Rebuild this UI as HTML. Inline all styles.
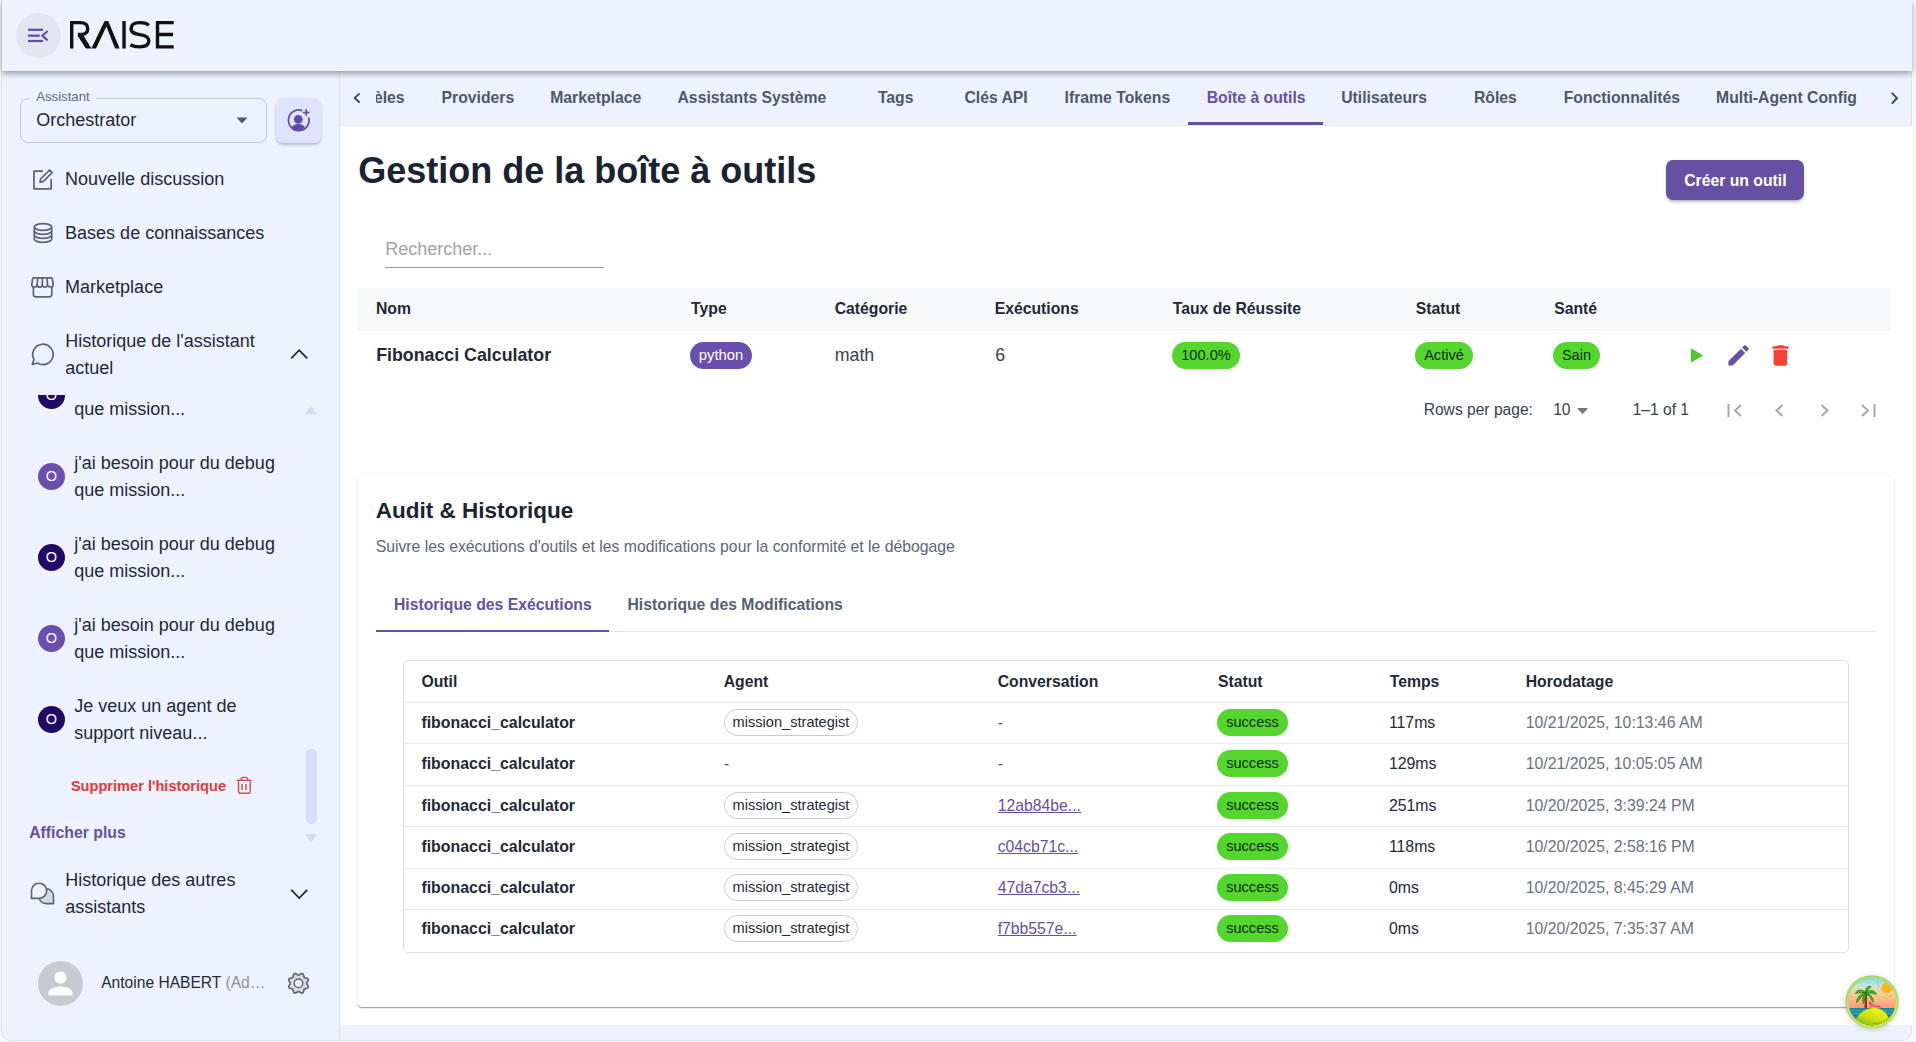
<!DOCTYPE html>
<html><head><meta charset="utf-8"><title>RAISE</title>
<style>
html,body{margin:0;padding:0;}
body{width:1916px;height:1042px;position:relative;overflow:hidden;font-family:"Liberation Sans",sans-serif;background:#f6f7f8;}
.r{position:absolute;display:block;}
.t{position:absolute;white-space:nowrap;line-height:1;}
</style></head><body>
<div class="r" style="left:0px;top:0px;width:1916px;height:1042px;background:#f6f7f8"></div>
<div class="r" style="left:1px;top:-2px;width:1911px;height:1043px;background:#eef2ff;border:1px solid #dfe1e6;border-radius:0 0 10px 10px;box-sizing:border-box;overflow:hidden"></div>
<div class="r" style="left:340px;top:126px;width:1572px;height:899px;background:#ffffff"></div>
<div class="r" style="left:339px;top:71px;width:1px;height:970px;background:#dde0ea"></div>
<div class="r" style="left:340px;top:125px;width:1572px;height:1px;background:#e3e6ee"></div>
<div class="r" style="left:2px;top:0px;width:1910px;height:71px;background:#eef2ff;box-shadow:0px 2px 4px -1px rgba(0,0,0,0.2),0px 4px 5px 0px rgba(0,0,0,0.14),0px 1px 10px 0px rgba(0,0,0,0.12)"></div>
<div class="r" style="left:16px;top:13px;width:45px;height:45px;background:#e3e6f0;border-radius:50%"></div>
<svg class="r" style="left:16px;top:13px;" width="45" height="45" viewBox="16 13 45 45"><g stroke="#5f50a6" stroke-width="2.2" fill="none"><line x1="28" y1="29.8" x2="43" y2="29.8"/><line x1="28" y1="35.7" x2="39.8" y2="35.7"/><line x1="28" y1="41" x2="43" y2="41"/><polyline points="47.6,31 42.3,35.7 47.6,40.3" stroke-linejoin="miter"/></g></svg>
<svg class="r" style="left:60px;top:10px;" width="120" height="50" viewBox="0 0 1916 798"><g stroke="#111" stroke-width="54" fill="none" stroke-linejoin="miter"><path d="M187 175 V615"/><path d="M160 202 H320 C410 202 443 245 443 298 C443 352 410 392 320 392 H285"/><path d="M290 368 L350 368 L502 615 L412 615 L290 422 Z" fill="#111" stroke="none"/><path d="M500 615 L712 175 L770 175 L952 615 L880 615 L741 262 L575 615 Z" fill="#111" stroke="none"/><path d="M1022 175 V615"/><path d="M1418 245 C1385 212 1335 202 1275 202 C1190 202 1135 235 1135 298 C1135 365 1195 380 1275 392 C1365 405 1418 425 1418 495 C1418 565 1360 588 1270 588 C1210 588 1160 575 1125 555"/><path d="M1557 175 V615 M1530 202 H1815 M1557 390 H1805 M1530 588 H1815"/></g></svg>
<div class="r" style="left:20px;top:98px;width:247px;height:45px;border:1px solid #c3c6cf;border-radius:8px;box-sizing:border-box"></div>
<div class="r" style="left:30px;top:92px;width:66px;height:10px;background:#eef2ff"></div>
<div class="t" style="left:36.2px;top:89px;line-height:15px;font-size:13.2px;font-weight:400;color:#5f6877;">Assistant</div>
<div class="t" style="left:36.2px;top:110px;line-height:20px;font-size:18px;font-weight:400;color:#1e293b;">Orchestrator</div>
<svg class="r" style="left:236px;top:117px;" width="12" height="7" viewBox="0 0 12 7"><path d="M0.5 0.5 L11.5 0.5 L6 6.5 Z" fill="#555b66"/></svg>
<div class="r" style="left:276px;top:98px;width:45px;height:45px;background:#dfe4fd;border-radius:7px;box-shadow:0 2px 3px rgba(0,0,0,.22)"></div>
<svg class="r" style="left:286px;top:108px;" width="24" height="24" viewBox="0 0 24 24"><g fill="none" stroke="#6149a8" stroke-width="1.7"><path d="M16.2 2.6 A10.3 10.3 0 1 0 22.6 9.4"/></g><g fill="#6149a8"><circle cx="12.3" cy="11.4" r="4.3"/><path d="M5.6 19.2 C7.3 16.8 9.5 15.9 12.3 15.9 C15.1 15.9 17.3 16.8 19 19.2 C17.2 21.2 14.9 22.2 12.3 22.2 C9.7 22.2 7.4 21.2 5.6 19.2 Z"/></g><g stroke="#6149a8" stroke-width="1.6"><line x1="20.2" y1="1.2" x2="20.2" y2="7.8"/><line x1="16.9" y1="4.5" x2="23.5" y2="4.5"/></g></svg>
<div class="t" style="left:65.1px;top:169px;line-height:20px;font-size:18px;font-weight:400;color:#1e293b;">Nouvelle discussion</div>
<svg class="r" style="left:32px;top:168px;" width="22" height="22" viewBox="0 0 22 22"><g fill="none" stroke="#5c6370" stroke-width="1.7" stroke-linejoin="round"><path d="M11 3.2 H2 V20.8 H19.2 V11"/><path d="M8 14.2 L8.6 11 L17.6 2 L20.2 4.6 L11.2 13.6 Z"/></g></svg>
<div class="t" style="left:65.1px;top:223px;line-height:20px;font-size:18px;font-weight:400;color:#1e293b;">Bases de connaissances</div>
<svg class="r" style="left:32px;top:222px;" width="22" height="22" viewBox="0 0 22 22"><g fill="none" stroke="#5c6370" stroke-width="1.7"><ellipse cx="11" cy="5" rx="8.7" ry="3.3"/><path d="M2.3 5 V17 C2.3 18.9 6.2 20.4 11 20.4 C15.8 20.4 19.7 18.9 19.7 17 V5"/><path d="M2.3 9 C2.3 10.9 6.2 12.4 11 12.4 C15.8 12.4 19.7 10.9 19.7 9"/><path d="M2.3 13 C2.3 14.9 6.2 16.4 11 16.4 C15.8 16.4 19.7 14.9 19.7 13"/></g></svg>
<div class="t" style="left:65.1px;top:277px;line-height:20px;font-size:18px;font-weight:400;color:#1e293b;">Marketplace</div>
<svg class="r" style="left:25px;top:270px;" width="35" height="30" viewBox="25 270 35 30"><g fill="none" stroke="#5c6370" stroke-width="1.7" stroke-linejoin="round" stroke-linecap="round"><path d="M33.6 277.8 H51.4 Q52.2 278 52.4 279.2 L53.2 284.6 Q53.4 286.9 50.8 287 Q48.2 287.1 47.5 285 L47.1 277.8"/><path d="M33.6 277.8 Q32.8 278 32.6 279.2 L31.8 284.6 Q31.6 286.9 34.2 287 Q36.8 287.1 37.2 285 L37.7 277.8"/><path d="M37.2 285 Q37.6 287.2 39.8 287.2 Q42.1 287.2 42.3 285 L42.4 277.8"/><path d="M42.3 285 Q42.6 287.2 44.9 287.2 Q47.2 287.2 47.5 285"/><path d="M33.4 287.3 V294.6 Q33.4 296.8 35.6 296.8 H49.6 Q51.8 296.8 51.8 294.6 V287.3"/></g></svg>
<div class="t" style="left:65.3px;top:331px;line-height:20px;font-size:18px;font-weight:400;color:#1e293b;">Historique de l'assistant</div>
<div class="t" style="left:65.3px;top:358px;line-height:20px;font-size:18px;font-weight:400;color:#1e293b;">actuel</div>
<svg class="r" style="left:25px;top:335px;" width="35" height="35" viewBox="25 335 35 35"><path d="M37.4 363 A10.2 10.2 0 1 0 33.9 359.2 L32.3 364.4 Z" fill="none" stroke="#5c6370" stroke-width="1.7" stroke-linejoin="round"/></svg>
<svg class="r" style="left:289px;top:347px;" width="20" height="13" viewBox="0 0 20 13"><polyline points="2.2,11.4 10.2,3.2 18.2,11.4" fill="none" stroke="#1f2430" stroke-width="1.7"/></svg>
<div class="r" style="left:2px;top:395px;width:300px;height:460px;overflow:hidden">
<div class="r" style="left:36px;top:-13.0px;width:27px;height:27px;border-radius:50%;background:#210a66"></div>
<div class="t" style="left:36px;top:-13.0px;width:27px;height:27px;line-height:27px;text-align:center;font-size:14.5px;color:#fff">O</div>
<div class="t" style="left:72.3px;top:-23px;line-height:20px;font-size:18px;color:#1e293b">j'ai besoin pour du debug</div>
<div class="t" style="left:72.3px;top:4px;line-height:20px;font-size:18px;color:#1e293b">que mission...</div>
<div class="r" style="left:36px;top:68.0px;width:27px;height:27px;border-radius:50%;background:#6a4fb0"></div>
<div class="t" style="left:36px;top:68.0px;width:27px;height:27px;line-height:27px;text-align:center;font-size:14.5px;color:#fff">O</div>
<div class="t" style="left:72.3px;top:58px;line-height:20px;font-size:18px;color:#1e293b">j'ai besoin pour du debug</div>
<div class="t" style="left:72.3px;top:85px;line-height:20px;font-size:18px;color:#1e293b">que mission...</div>
<div class="r" style="left:36px;top:149.0px;width:27px;height:27px;border-radius:50%;background:#210a66"></div>
<div class="t" style="left:36px;top:149.0px;width:27px;height:27px;line-height:27px;text-align:center;font-size:14.5px;color:#fff">O</div>
<div class="t" style="left:72.3px;top:139px;line-height:20px;font-size:18px;color:#1e293b">j'ai besoin pour du debug</div>
<div class="t" style="left:72.3px;top:166px;line-height:20px;font-size:18px;color:#1e293b">que mission...</div>
<div class="r" style="left:36px;top:230.0px;width:27px;height:27px;border-radius:50%;background:#6a4fb0"></div>
<div class="t" style="left:36px;top:230.0px;width:27px;height:27px;line-height:27px;text-align:center;font-size:14.5px;color:#fff">O</div>
<div class="t" style="left:72.3px;top:220px;line-height:20px;font-size:18px;color:#1e293b">j'ai besoin pour du debug</div>
<div class="t" style="left:72.3px;top:247px;line-height:20px;font-size:18px;color:#1e293b">que mission...</div>
<div class="r" style="left:36px;top:311.0px;width:27px;height:27px;border-radius:50%;background:#210a66"></div>
<div class="t" style="left:36px;top:311.0px;width:27px;height:27px;line-height:27px;text-align:center;font-size:14.5px;color:#fff">O</div>
<div class="t" style="left:72.3px;top:301px;line-height:20px;font-size:18px;color:#1e293b">Je veux un agent de</div>
<div class="t" style="left:72.3px;top:328px;line-height:20px;font-size:18px;color:#1e293b">support niveau...</div>
</div>
<svg class="r" style="left:304px;top:404px;" width="14" height="11" viewBox="0 0 14 11"><path d="M1 10 L7 2 L13 10 Z" fill="#d4daf3"/></svg>
<div class="r" style="left:306px;top:749px;width:11px;height:75px;background:#d9def8;border-radius:5px"></div>
<svg class="r" style="left:304px;top:833px;" width="14" height="11" viewBox="0 0 14 11"><path d="M1 1 L13 1 L7 10 Z" fill="#d4daf3"/></svg>
<div class="t" style="left:70.9px;top:778px;line-height:16px;font-size:14.6px;font-weight:700;color:#e53935;">Supprimer l'historique</div>
<svg class="r" style="left:228px;top:770px;" width="32" height="30" viewBox="228 770 32 30"><g fill="none" stroke="#dc4a4a" stroke-width="1.4" stroke-linejoin="round"><path d="M236.6 780.3 H251.4"/><path d="M240.9 780 Q241.2 777.4 243.1 777.4 H245.8 Q247.6 777.4 247.9 780"/><path d="M238.5 780.6 V791.3 Q238.5 793.2 240.4 793.2 H248.3 Q250.2 793.2 250.2 791.3 V780.6"/></g><g fill="#d26a6e"><rect x="241.2" y="784" width="1.8" height="6"/><rect x="245.1" y="784" width="1.8" height="6"/></g></svg>
<div class="t" style="left:29.2px;top:824px;line-height:17px;font-size:15.8px;font-weight:700;color:#6750a4;">Afficher plus</div>
<div class="t" style="left:65.3px;top:870px;line-height:20px;font-size:18px;font-weight:400;color:#1e293b;">Historique des autres</div>
<div class="t" style="left:65.3px;top:897px;line-height:20px;font-size:18px;font-weight:400;color:#1e293b;">assistants</div>
<svg class="r" style="left:25px;top:875px;" width="35" height="35" viewBox="25 875 35 35"><g stroke="#5c6370" stroke-width="1.6" stroke-linejoin="round"><path d="M53.5 896.2 V903.6 H46.2 A7.4 7.4 0 1 1 53.5 896.2 Z" fill="#d6d9e1"/><path d="M31.5 890.8 A7.6 7.6 0 1 1 39.1 898.4 H31.5 Z" fill="#eef2ff"/></g></svg>
<svg class="r" style="left:289px;top:887px;" width="20" height="13" viewBox="0 0 20 13"><polyline points="2.2,2.8 10.2,11 18.2,2.8" fill="none" stroke="#1f2430" stroke-width="1.7"/></svg>
<div class="r" style="left:38px;top:961px;width:45px;height:45px;background:#c7cad1;border-radius:50%"></div>
<svg class="r" style="left:38px;top:961px;" width="45" height="45" viewBox="0 0 24 24"><path fill="#ffffff" d="M12 12c2.21 0 4-1.79 4-4s-1.79-4-4-4-4 1.79-4 4 1.79 4 4 4zm0 2c-2.67 0-8 1.34-8 4v2h16v-2c0-2.66-5.33-4-8-4z" transform="translate(2.4 2.4) scale(0.8)"/></svg>
<div class="t" style="left:101.2px;top:974px;line-height:17px;font-size:15.6px;font-weight:400;color:#1e293b;">Antoine HABERT <span style="color:#8a919c">(Ad…</span></div>
<svg class="r" style="left:280px;top:965px;" width="36" height="36" viewBox="280 965 36 36"><path d="M298.50 975.10 L299.05 974.96 L299.65 974.60 L300.32 974.13 L301.07 973.71 L301.83 973.50 L302.52 973.60 L303.08 974.02 L303.46 974.70 L303.69 975.53 L303.84 976.34 L304.01 977.02 L304.30 977.50 L304.78 977.79 L305.46 977.96 L306.27 978.11 L307.10 978.34 L307.78 978.72 L308.20 979.28 L308.30 979.97 L308.09 980.73 L307.67 981.48 L307.20 982.15 L306.84 982.75 L306.70 983.30 L306.84 983.85 L307.20 984.45 L307.67 985.12 L308.09 985.87 L308.30 986.63 L308.20 987.32 L307.78 987.88 L307.10 988.26 L306.27 988.49 L305.46 988.64 L304.78 988.81 L304.30 989.10 L304.01 989.58 L303.84 990.26 L303.69 991.07 L303.46 991.90 L303.08 992.58 L302.52 993.00 L301.83 993.10 L301.07 992.89 L300.32 992.47 L299.65 992.00 L299.05 991.64 L298.50 991.50 L297.95 991.64 L297.35 992.00 L296.68 992.47 L295.93 992.89 L295.17 993.10 L294.48 993.00 L293.92 992.58 L293.54 991.90 L293.31 991.07 L293.16 990.26 L292.99 989.58 L292.70 989.10 L292.22 988.81 L291.54 988.64 L290.73 988.49 L289.90 988.26 L289.22 987.88 L288.80 987.32 L288.70 986.63 L288.91 985.87 L289.33 985.12 L289.80 984.45 L290.16 983.85 L290.30 983.30 L290.16 982.75 L289.80 982.15 L289.33 981.48 L288.91 980.73 L288.70 979.97 L288.80 979.28 L289.22 978.72 L289.90 978.34 L290.73 978.11 L291.54 977.96 L292.22 977.79 L292.70 977.50 L292.99 977.02 L293.16 976.34 L293.31 975.53 L293.54 974.70 L293.92 974.02 L294.48 973.60 L295.17 973.50 L295.93 973.71 L296.68 974.13 L297.35 974.60 L297.95 974.96 L298.50 975.10 Z" fill="#d9dbe2" stroke="#5c6370" stroke-width="1.6" stroke-linejoin="round"/><circle cx="298.5" cy="983.3" r="4.3" fill="#eef2ff" stroke="#5c6370" stroke-width="1.4"/></svg>
<svg class="r" style="left:350px;top:88px;" width="14" height="20" viewBox="0 0 14 20"><polyline points="9.6,5.3 4.7,9.9 9.6,14.5" fill="none" stroke="#3a4150" stroke-width="1.8"/></svg>
<div class="r" style="left:376px;top:80px;width:34px;height:30px;overflow:hidden"><div class="t" style="right:5.4px;top:9px;line-height:17px;font-size:15.75px;font-weight:700;color:#4d5869">Modèles</div></div>
<div class="t" style="left:441.6px;top:89px;line-height:17px;font-size:15.75px;font-weight:700;color:#4d5869;">Providers</div>
<div class="t" style="left:550.2px;top:89px;line-height:17px;font-size:15.75px;font-weight:700;color:#4d5869;">Marketplace</div>
<div class="t" style="left:677.5px;top:89px;line-height:17px;font-size:15.75px;font-weight:700;color:#4d5869;">Assistants Système</div>
<div class="t" style="left:877.9px;top:89px;line-height:17px;font-size:15.75px;font-weight:700;color:#4d5869;">Tags</div>
<div class="t" style="left:964.4px;top:89px;line-height:17px;font-size:15.75px;font-weight:700;color:#4d5869;">Clés API</div>
<div class="t" style="left:1064.6px;top:89px;line-height:17px;font-size:15.75px;font-weight:700;color:#4d5869;">Iframe Tokens</div>
<div class="t" style="left:1206.7px;top:89px;line-height:17px;font-size:15.75px;font-weight:700;color:#6750a4;">Boîte à outils</div>
<div class="t" style="left:1341.2px;top:89px;line-height:17px;font-size:15.75px;font-weight:700;color:#4d5869;">Utilisateurs</div>
<div class="t" style="left:1473.9px;top:89px;line-height:17px;font-size:15.75px;font-weight:700;color:#4d5869;">Rôles</div>
<div class="t" style="left:1563.7px;top:89px;line-height:17px;font-size:15.75px;font-weight:700;color:#4d5869;">Fonctionnalités</div>
<div class="t" style="left:1716.1px;top:89px;line-height:17px;font-size:15.75px;font-weight:700;color:#4d5869;">Multi-Agent Config</div>
<div class="r" style="left:1188px;top:122px;width:135px;height:3px;background:#6750a4"></div>
<svg class="r" style="left:1885px;top:89px;" width="16" height="18" viewBox="0 0 16 18"><polyline points="6.8,3.8 12,9.2 6.8,14.6" fill="none" stroke="#3a4150" stroke-width="1.9"/></svg>
<div class="t" style="left:358.2px;top:150px;line-height:41px;font-size:36px;font-weight:700;color:#1a2332;">Gestion de la boîte à outils</div>
<div class="r" style="left:1666px;top:160px;width:138px;height:40px;background:#6750a4;border-radius:7px;box-shadow:0 3px 3px -2px rgba(0,0,0,.25),0 2px 4px rgba(0,0,0,.14)"></div>
<div class="t" style="left:1684.2px;top:172px;line-height:17px;font-size:15.75px;font-weight:700;color:#ffffff;">Créer un outil</div>
<div class="t" style="left:385.2px;top:239px;line-height:20px;font-size:18px;font-weight:400;color:#a3a3a3;">Rechercher...</div>
<div class="r" style="left:385px;top:267px;width:219px;height:1px;background:#9a9a9a"></div>
<div class="r" style="left:357px;top:288px;width:1534px;height:42px;background:#f8f9fb;border-bottom:1px solid #eef0f3;box-sizing:border-box"></div>
<div class="t" style="left:375.9px;top:300px;line-height:17px;font-size:15.75px;font-weight:700;color:#1f2937;">Nom</div>
<div class="t" style="left:691.1px;top:300px;line-height:17px;font-size:15.75px;font-weight:700;color:#1f2937;">Type</div>
<div class="t" style="left:834.7px;top:300px;line-height:17px;font-size:15.75px;font-weight:700;color:#1f2937;">Catégorie</div>
<div class="t" style="left:994.7px;top:300px;line-height:17px;font-size:15.75px;font-weight:700;color:#1f2937;">Exécutions</div>
<div class="t" style="left:1172.7px;top:300px;line-height:17px;font-size:15.75px;font-weight:700;color:#1f2937;">Taux de Réussite</div>
<div class="t" style="left:1415.7px;top:300px;line-height:17px;font-size:15.75px;font-weight:700;color:#1f2937;">Statut</div>
<div class="t" style="left:1554.2px;top:300px;line-height:17px;font-size:15.75px;font-weight:700;color:#1f2937;">Santé</div>
<div class="t" style="left:376.2px;top:345px;line-height:20px;font-size:17.8px;font-weight:700;color:#1f2937;">Fibonacci Calculator</div>
<div class="r" style="left:690px;top:342px;width:62px;height:27px;border-radius:13.5px;background:#6a4fb0;color:#ffffff;font-size:14.8px;line-height:27px;text-align:center;white-space:nowrap">python</div>
<div class="t" style="left:834.7px;top:345px;line-height:20px;font-size:17.8px;font-weight:400;color:#374151;">math</div>
<div class="t" style="left:995.2px;top:345px;line-height:20px;font-size:17.8px;font-weight:400;color:#374151;">6</div>
<div class="r" style="left:1172px;top:342px;width:68px;height:27px;border-radius:13.5px;background:#54d62e;color:#0f2e0c;font-size:14.6px;line-height:26.5px;text-align:center;white-space:nowrap">100.0%</div>
<div class="r" style="left:1415px;top:342px;width:58px;height:27px;border-radius:13.5px;background:#54d62e;color:#0f2e0c;font-size:14.6px;line-height:26.5px;text-align:center;white-space:nowrap">Activé</div>
<div class="r" style="left:1553px;top:342px;width:47px;height:27px;border-radius:13.5px;background:#54d62e;color:#0f2e0c;font-size:14.6px;line-height:26.5px;text-align:center;white-space:nowrap">Sain</div>
<svg class="r" style="left:1680px;top:340px;" width="120" height="30" viewBox="1680 340 120 30"><path fill="#4cc92a" transform="translate(1682.1 342.9) scale(1.1 1.05)" d="M8 5v14l11-7z"/><path fill="#6750a4" transform="translate(1725 341.8) scale(1.133)" d="M3 17.25V21h3.75L17.81 9.94l-3.75-3.75zM20.71 7.04c.39-.39.39-1.02 0-1.41l-2.34-2.34a.9959.9959 0 0 0-1.41 0l-1.83 1.83 3.75 3.75z"/><path fill="#f44336" transform="translate(1766.7 341.8) scale(1.14)" d="M6 19c0 1.1.9 2 2 2h8c1.1 0 2-.9 2-2V7H6v12zM19 4h-3.5l-1-1h-5l-1 1H5v2h14V4z"/></svg>
<div class="t" style="left:1423.7px;top:401px;line-height:17px;font-size:15.6px;font-weight:400;color:#374151;">Rows per page:</div>
<div class="t" style="left:1553.2px;top:401px;line-height:17px;font-size:15.6px;font-weight:400;color:#374151;">10</div>
<svg class="r" style="left:1576px;top:407px;" width="14" height="8" viewBox="0 0 14 8"><path d="M1 1 H12.2 L6.6 7 Z" fill="#737373"/></svg>
<div class="t" style="left:1632.7px;top:401px;line-height:17px;font-size:15.6px;font-weight:400;color:#374151;">1–1 of 1</div>
<svg class="r" style="left:1726px;top:402px;" width="17" height="17" viewBox="0 0 17 17"><g fill="none" stroke="#a3a8b0" stroke-width="2"><line x1="2.5" y1="2" x2="2.5" y2="15"/><polyline points="15,3 9,8.5 15,14"/></g></svg>
<svg class="r" style="left:1773px;top:402px;" width="12" height="17" viewBox="0 0 12 17"><polyline points="9.5,3 3.5,8.5 9.5,14" fill="none" stroke="#a3a8b0" stroke-width="2"/></svg>
<svg class="r" style="left:1819px;top:402px;" width="12" height="17" viewBox="0 0 12 17"><polyline points="2.5,3 8.5,8.5 2.5,14" fill="none" stroke="#a3a8b0" stroke-width="2"/></svg>
<svg class="r" style="left:1860px;top:402px;" width="17" height="17" viewBox="0 0 17 17"><g fill="none" stroke="#a3a8b0" stroke-width="2"><line x1="14.5" y1="2" x2="14.5" y2="15"/><polyline points="2,3 8,8.5 2,14"/></g></svg>
<div class="r" style="left:357px;top:476px;width:1537px;height:531px;background:#fff;border-radius:5px;box-shadow:0px 2px 1px -1px rgba(0,0,0,0.2),0px 1px 1px 0px rgba(0,0,0,0.14),0px 1px 3px 0px rgba(0,0,0,0.12)"></div>
<div class="t" style="left:375.7px;top:498px;line-height:25px;font-size:22.5px;font-weight:700;color:#1a2332;">Audit &amp; Historique</div>
<div class="t" style="left:375.7px;top:538px;line-height:17px;font-size:15.76px;font-weight:400;color:#5c6878;">Suivre les exécutions d'outils et les modifications pour la conformité et le débogage</div>
<div class="r" style="left:376px;top:631px;width:1500px;height:1px;background:#e5e7eb"></div>
<div class="t" style="left:393.9px;top:596px;line-height:17px;font-size:15.75px;font-weight:700;color:#6750a4;">Historique des Exécutions</div>
<div class="t" style="left:627.5px;top:596px;line-height:17px;font-size:15.75px;font-weight:700;color:#536175;">Historique des Modifications</div>
<div class="r" style="left:376px;top:630px;width:233px;height:2px;background:#6750a4"></div>
<div class="r" style="left:403px;top:660px;width:1446px;height:293px;border:1px solid #e0e0e0;border-radius:5px;box-sizing:border-box"></div>
<div class="t" style="left:421.4px;top:673px;line-height:17px;font-size:15.75px;font-weight:700;color:#1f2937;">Outil</div>
<div class="t" style="left:723.7px;top:673px;line-height:17px;font-size:15.75px;font-weight:700;color:#1f2937;">Agent</div>
<div class="t" style="left:997.7px;top:673px;line-height:17px;font-size:15.75px;font-weight:700;color:#1f2937;">Conversation</div>
<div class="t" style="left:1217.9px;top:673px;line-height:17px;font-size:15.75px;font-weight:700;color:#1f2937;">Statut</div>
<div class="t" style="left:1389.7px;top:673px;line-height:17px;font-size:15.75px;font-weight:700;color:#1f2937;">Temps</div>
<div class="t" style="left:1525.7px;top:673px;line-height:17px;font-size:15.75px;font-weight:700;color:#1f2937;">Horodatage</div>
<div class="r" style="left:404px;top:702px;width:1444px;height:1px;background:#e9e9ea"></div>
<div class="r" style="left:404px;top:743px;width:1444px;height:1px;background:#e9e9ea"></div>
<div class="r" style="left:404px;top:785px;width:1444px;height:1px;background:#e9e9ea"></div>
<div class="r" style="left:404px;top:826px;width:1444px;height:1px;background:#e9e9ea"></div>
<div class="r" style="left:404px;top:868px;width:1444px;height:1px;background:#e9e9ea"></div>
<div class="r" style="left:404px;top:909px;width:1444px;height:1px;background:#e9e9ea"></div>
<div class="t" style="left:421.4px;top:714px;line-height:17px;font-size:15.9px;font-weight:700;color:#1f2937;">fibonacci_calculator</div>
<div class="r" style="left:724px;top:709px;width:134px;height:27px;border-radius:13.5px;background:#fff;border:1px solid #c8cbd0;box-sizing:border-box;color:#1f2937;font-size:14.6px;line-height:25px;text-align:center;white-space:nowrap">mission_strategist</div>
<div class="t" style="left:997.7px;top:714px;line-height:17px;font-size:16px;font-weight:400;color:#4b5563;">-</div>
<div class="r" style="left:1217px;top:709px;width:71px;height:27px;border-radius:13.5px;background:#54d62e;color:#0f2e0c;font-size:14.6px;line-height:27px;text-align:center;white-space:nowrap">success</div>
<div class="t" style="left:1388.9px;top:714px;line-height:17px;font-size:15.85px;font-weight:400;color:#1f2937;">117ms</div>
<div class="t" style="left:1525.7px;top:714px;line-height:17px;font-size:15.85px;font-weight:400;color:#6b7280;">10/21/2025, 10:13:46 AM</div>
<div class="t" style="left:421.4px;top:755px;line-height:17px;font-size:15.9px;font-weight:700;color:#1f2937;">fibonacci_calculator</div>
<div class="t" style="left:723.7px;top:755px;line-height:17px;font-size:16px;font-weight:400;color:#4b5563;">-</div>
<div class="t" style="left:997.7px;top:755px;line-height:17px;font-size:16px;font-weight:400;color:#4b5563;">-</div>
<div class="r" style="left:1217px;top:750px;width:71px;height:27px;border-radius:13.5px;background:#54d62e;color:#0f2e0c;font-size:14.6px;line-height:27px;text-align:center;white-space:nowrap">success</div>
<div class="t" style="left:1388.9px;top:755px;line-height:17px;font-size:15.85px;font-weight:400;color:#1f2937;">129ms</div>
<div class="t" style="left:1525.7px;top:755px;line-height:17px;font-size:15.85px;font-weight:400;color:#6b7280;">10/21/2025, 10:05:05 AM</div>
<div class="t" style="left:421.4px;top:797px;line-height:17px;font-size:15.9px;font-weight:700;color:#1f2937;">fibonacci_calculator</div>
<div class="r" style="left:724px;top:792px;width:134px;height:27px;border-radius:13.5px;background:#fff;border:1px solid #c8cbd0;box-sizing:border-box;color:#1f2937;font-size:14.6px;line-height:25px;text-align:center;white-space:nowrap">mission_strategist</div>
<div class="t" style="left:997.7px;top:797px;line-height:17px;font-size:15.75px;font-weight:400;color:#6750a4;text-decoration:underline;text-underline-offset:1px">12ab84be...</div>
<div class="r" style="left:1217px;top:792px;width:71px;height:27px;border-radius:13.5px;background:#54d62e;color:#0f2e0c;font-size:14.6px;line-height:27px;text-align:center;white-space:nowrap">success</div>
<div class="t" style="left:1388.9px;top:797px;line-height:17px;font-size:15.85px;font-weight:400;color:#1f2937;">251ms</div>
<div class="t" style="left:1525.7px;top:797px;line-height:17px;font-size:15.85px;font-weight:400;color:#6b7280;">10/20/2025, 3:39:24 PM</div>
<div class="t" style="left:421.4px;top:838px;line-height:17px;font-size:15.9px;font-weight:700;color:#1f2937;">fibonacci_calculator</div>
<div class="r" style="left:724px;top:833px;width:134px;height:27px;border-radius:13.5px;background:#fff;border:1px solid #c8cbd0;box-sizing:border-box;color:#1f2937;font-size:14.6px;line-height:25px;text-align:center;white-space:nowrap">mission_strategist</div>
<div class="t" style="left:997.7px;top:838px;line-height:17px;font-size:15.75px;font-weight:400;color:#6750a4;text-decoration:underline;text-underline-offset:1px">c04cb71c...</div>
<div class="r" style="left:1217px;top:833px;width:71px;height:27px;border-radius:13.5px;background:#54d62e;color:#0f2e0c;font-size:14.6px;line-height:27px;text-align:center;white-space:nowrap">success</div>
<div class="t" style="left:1388.9px;top:838px;line-height:17px;font-size:15.85px;font-weight:400;color:#1f2937;">118ms</div>
<div class="t" style="left:1525.7px;top:838px;line-height:17px;font-size:15.85px;font-weight:400;color:#6b7280;">10/20/2025, 2:58:16 PM</div>
<div class="t" style="left:421.4px;top:879px;line-height:17px;font-size:15.9px;font-weight:700;color:#1f2937;">fibonacci_calculator</div>
<div class="r" style="left:724px;top:874px;width:134px;height:27px;border-radius:13.5px;background:#fff;border:1px solid #c8cbd0;box-sizing:border-box;color:#1f2937;font-size:14.6px;line-height:25px;text-align:center;white-space:nowrap">mission_strategist</div>
<div class="t" style="left:997.7px;top:879px;line-height:17px;font-size:15.75px;font-weight:400;color:#6750a4;text-decoration:underline;text-underline-offset:1px">47da7cb3...</div>
<div class="r" style="left:1217px;top:874px;width:71px;height:27px;border-radius:13.5px;background:#54d62e;color:#0f2e0c;font-size:14.6px;line-height:27px;text-align:center;white-space:nowrap">success</div>
<div class="t" style="left:1388.9px;top:879px;line-height:17px;font-size:15.85px;font-weight:400;color:#1f2937;">0ms</div>
<div class="t" style="left:1525.7px;top:879px;line-height:17px;font-size:15.85px;font-weight:400;color:#6b7280;">10/20/2025, 8:45:29 AM</div>
<div class="t" style="left:421.4px;top:920px;line-height:17px;font-size:15.9px;font-weight:700;color:#1f2937;">fibonacci_calculator</div>
<div class="r" style="left:724px;top:915px;width:134px;height:27px;border-radius:13.5px;background:#fff;border:1px solid #c8cbd0;box-sizing:border-box;color:#1f2937;font-size:14.6px;line-height:25px;text-align:center;white-space:nowrap">mission_strategist</div>
<div class="t" style="left:997.7px;top:920px;line-height:17px;font-size:15.75px;font-weight:400;color:#6750a4;text-decoration:underline;text-underline-offset:1px">f7bb557e...</div>
<div class="r" style="left:1217px;top:915px;width:71px;height:27px;border-radius:13.5px;background:#54d62e;color:#0f2e0c;font-size:14.6px;line-height:27px;text-align:center;white-space:nowrap">success</div>
<div class="t" style="left:1388.9px;top:920px;line-height:17px;font-size:15.85px;font-weight:400;color:#1f2937;">0ms</div>
<div class="t" style="left:1525.7px;top:920px;line-height:17px;font-size:15.85px;font-weight:400;color:#6b7280;">10/20/2025, 7:35:37 AM</div>
<svg class="r" style="left:1845px;top:975px;filter:drop-shadow(0 1px 2px rgba(0,0,0,.2))" width="54" height="54" viewBox="0 0 54 54"><defs><linearGradient id="sky" x1="0" y1="0" x2="0" y2="1"><stop offset="0.08" stop-color="#86dcf2"/><stop offset=".22" stop-color="#cfe6c8"/><stop offset=".38" stop-color="#f7c98e"/><stop offset=".58" stop-color="#ff9d7c"/><stop offset="1" stop-color="#ff9d7c"/></linearGradient><linearGradient id="isl" x1="0.85" y1="0.1" x2="0.2" y2="1"><stop offset="0" stop-color="#f8f500"/><stop offset=".5" stop-color="#c8e010"/><stop offset="1" stop-color="#5fae1a"/></linearGradient><linearGradient id="ring" x1="0.2" y1="0" x2="0.6" y2="1"><stop offset="0" stop-color="#9bd866"/><stop offset=".5" stop-color="#b0d46a"/><stop offset="1" stop-color="#c8e23a"/></linearGradient><clipPath id="cp"><circle cx="27" cy="26.8" r="23.6"/></clipPath></defs><circle cx="27" cy="26.8" r="26.6" fill="url(#ring)"/><g clip-path="url(#cp)"><rect x="0" y="0" width="54" height="54" fill="url(#sky)"/><circle cx="42.3" cy="12.6" r="5.6" fill="#ffb516"/><path d="M32.5 6.8 C33.5 13 38 19 45.5 21.4" stroke="#c27a3a" stroke-width="0.8" stroke-dasharray="0.9 1.5" fill="none"/><rect x="0" y="33" width="54" height="21" fill="#1a8aa2"/><path d="M0 35.6 H54 M0 38.6 H54" stroke="#3fb0c8" stroke-width="0.7"/><path d="M24 26.4 L26.2 32.6 M24 26.4 L29 31 L34.8 31.4 L35 32.8" stroke="#e8407a" stroke-width="1.3" fill="none" stroke-linejoin="round"/><path d="M9 54 L11.6 42.9 C15 37 22 33 29.4 33 C36 33 41 37 43.6 42.9 L46 54 Z" fill="url(#isl)"/><path d="M43.6 43 C40 47 34 48.6 27 48.6" stroke="#2f5a0c" stroke-width="0.7" stroke-dasharray="0.9 1.1" fill="none"/><path d="M19.4 33.4 C19.6 28 19.8 23 20.8 18.5 L22.4 18.8 C21.8 23 21.8 28 22.2 33.4 Z" fill="#8a3a10"/><g fill="#3fc21f" stroke="#1c7a0e" stroke-width="0.75" stroke-linejoin="round"><path d="M20.8 17.5 C16.5 13.8 12 14.6 10.4 18.6 C13.5 17.4 17 17.6 20.8 17.5 Z"/><path d="M20.8 17.5 C15.5 18.5 11.8 22.5 11.6 27.5 C14.5 24 17.5 21 20.8 17.5 Z"/><path d="M20.8 17.5 C17.5 21.5 17 25.5 18.6 28.8 C19.6 25 20.2 21.5 20.8 17.5 Z"/><path d="M20.8 17.5 C20 13 22.5 10.8 26 11.8 C24 13.5 22.5 15.5 20.8 17.5 Z"/><path d="M20.8 17.5 C25 14.2 29.5 15 31.4 19.2 C28 18.2 24.5 17.8 20.8 17.5 Z"/><path d="M20.8 17.5 C25.5 19 28.5 23 28.2 27.2 C26 23.5 23.5 20.5 20.8 17.5 Z"/></g></g><circle cx="27" cy="26.8" r="24.6" fill="none" stroke="#ffffff" stroke-opacity=".25" stroke-width="1"/></svg>
</body></html>
